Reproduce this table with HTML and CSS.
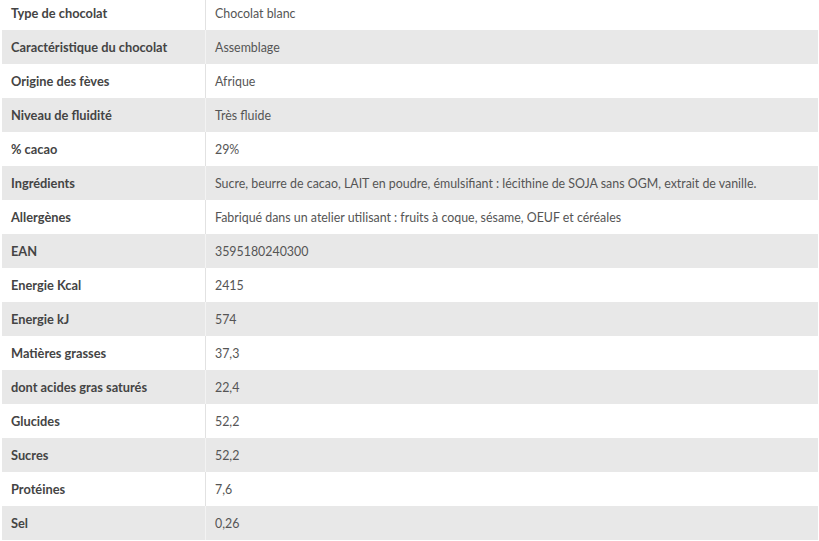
FILE: index.html
```html
<!DOCTYPE html>
<html lang="fr">
<head>
<meta charset="utf-8">
<link rel="stylesheet" href="styles.css">
</head>
<body>
<div class="wrap">
<table class="specs">
<tbody>
<tr><th>Type de chocolat</th><td>Chocolat blanc</td></tr>
<tr><th>Caractéristique du chocolat</th><td>Assemblage</td></tr>
<tr><th>Origine des fèves</th><td>Afrique</td></tr>
<tr><th>Niveau de fluidité</th><td>Très fluide</td></tr>
<tr><th>% cacao</th><td>29%</td></tr>
<tr><th>Ingrédients</th><td>Sucre, beurre de cacao, LAIT en poudre, émulsifiant : lécithine de SOJA sans OGM, extrait de vanille.</td></tr>
<tr><th>Allergènes</th><td>Fabriqué dans un atelier utilisant : fruits à coque, sésame, OEUF et céréales</td></tr>
<tr><th>EAN</th><td>3595180240300</td></tr>
<tr><th>Energie Kcal</th><td>2415</td></tr>
<tr><th>Energie kJ</th><td>574</td></tr>
<tr><th>Matières grasses</th><td>37,3</td></tr>
<tr><th>dont acides gras saturés</th><td>22,4</td></tr>
<tr><th>Glucides</th><td>52,2</td></tr>
<tr><th>Sucres</th><td>52,2</td></tr>
<tr><th>Protéines</th><td>7,6</td></tr>
<tr><th>Sel</th><td>0,26</td></tr>
</tbody>
</table>
</div>
</body>
</html>
```
FILE: styles.css
```css
html, body {
  margin: 0;
  padding: 0;
  background: #fff;
}
.wrap {
  padding: 0 1px 0 2px;
  margin-top: -4px;
  overflow: hidden;
}
.specs {
  width: 816px;
  border-collapse: collapse;
  font-family: Lato, "Liberation Sans", sans-serif;
}
.specs tr {
  height: 34px;
}
.specs tr:nth-child(even) {
  background: #e8e8e8;
}
.specs th {
  width: 185px;
  padding: 0 9px;
  text-align: left;
  font-size: 12.8px;
  font-weight: bold;
  color: #444;
  vertical-align: middle;
}
.specs td {
  padding: 0 9px;
  font-size: 12.4px;
  color: #555;
  border-left: 1px solid #e2e2e2;
  vertical-align: middle;
}
.specs tr:nth-child(even) td {
  border-left-color: #f3f3f3;
}
```
